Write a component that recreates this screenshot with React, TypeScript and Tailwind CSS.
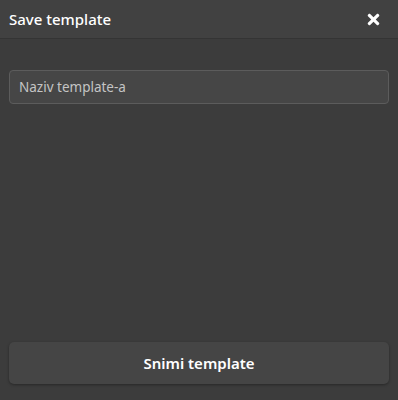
import { FaTimes } from 'react-icons/fa';

const App = () => {
  return (
    <div
      className="w-[398px] h-[400px] bg-[#3c3c3c] flex flex-col text-white"
      style={{ fontFamily: '"Noto Sans", sans-serif' }}
    >
      {/* Header */}
      <div className="h-[39px] shrink-0 bg-[#414141] border-b border-[#343434] flex items-center justify-between pl-[9px] pr-[16px]">
        <span className="text-[15px] font-medium">Save template</span>
        <button className="text-white" title="Close">
          <FaTimes size={17} />
        </button>
      </div>

      {/* Body */}
      <div className="flex-1 px-[9px] pt-[31px]">
        <input
          type="text"
          placeholder="Naziv template-a"
          className="w-full h-[34px] rounded-[4px] bg-[#464646] border border-[#5c5c5c] px-[9px] text-[13.5px] text-white placeholder:text-[#c4c4c4] outline-none"
        />
      </div>

      {/* Footer */}
      <div className="px-[9px] pb-[16px]">
        <button className="w-full h-[42px] rounded-[5px] bg-[#454545] shadow-[0_1px_3px_rgba(0,0,0,0.35)] text-[15px] font-semibold text-white">
          Snimi template
        </button>
      </div>
    </div>
  );
};

export default App;
